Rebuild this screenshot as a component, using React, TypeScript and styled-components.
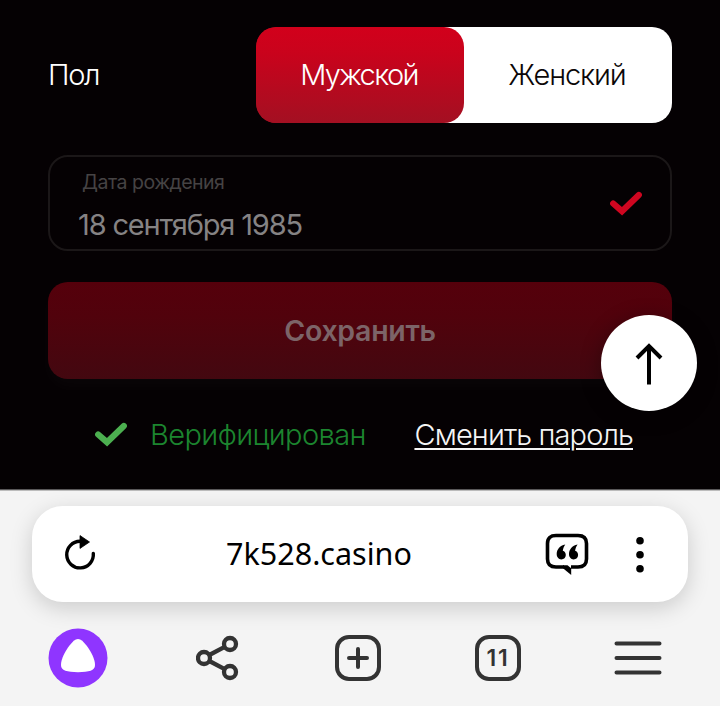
import React from "react";
import styled, { createGlobalStyle } from "styled-components";

const GlobalStyle = createGlobalStyle`
  *, *::before, *::after { box-sizing: border-box; }
  html, body { margin: 0; padding: 0; background: #f4f4f4; }
  button { border: 0; padding: 0; margin: 0; background: none; font: inherit; color: inherit; }
  svg { display: block; flex: none; }
`;

const Screen = styled.div`
  width: 720px;
  height: 706px;
  display: flex;
  flex-direction: column;
  overflow: hidden;
  font-family: Inter, "Liberation Sans", sans-serif;
  font-weight: 340;
  font-size: 29px;
  line-height: 36px;
  white-space: nowrap;
`;

const Profile = styled.main`
  position: relative;
  height: 490px;
  flex: none;
  padding: 27px 48px 0;
  background: #050103;
  border-bottom: 1px solid #5a5859;
  display: flex;
  flex-direction: column;
  color: #fff;
`;

const GenderRow = styled.div`
  display: flex;
  align-items: center;
  justify-content: space-between;
  height: 96px;
`;

const Label = styled.span<{ $spacing?: number }>`
  letter-spacing: ${(p) => p.$spacing ?? 0}px;
`;

const Segmented = styled.div`
  width: 416px;
  height: 96px;
  display: flex;
  border-radius: 20px;
  overflow: hidden;
  background: linear-gradient(90deg, #a50d20 30%, #fff 30%);
`;

const Segment = styled.button<{ $active?: boolean }>`
  flex: 1;
  padding-right: 2px;
  border-radius: 20px;
  color: ${(p) => (p.$active ? "#fff" : "#0b0708")};
  background: ${(p) =>
    p.$active ? "linear-gradient(180deg, #d2001b 0%, #c9031c 28%, #a31022 100%)" : "transparent"};
`;

const DateField = styled.div`
  margin-top: 32px;
  height: 96px;
  border: 2px solid #1b1718;
  border-radius: 20px;
  padding: 0 27px 0 28px;
  display: flex;
  align-items: center;
  justify-content: space-between;
`;

const FieldText = styled.div`
  display: flex;
  flex-direction: column;
  align-self: flex-start;
  padding-top: 11px;
`;

const Caption = styled.span`
  padding-left: 4px;
  font-size: 19.5px;
  font-weight: 400;
  letter-spacing: -0.5px;
  line-height: 28px;
  color: #464344;
`;

const DateValue = styled.span`
  margin-top: 11px;
  line-height: 36px;
  font-weight: 400;
  letter-spacing: -1.17px;
  color: #858384;
`;

const SaveButton = styled.button`
  margin-top: 31px;
  height: 97px;
  flex: none;
  border-radius: 20px;
  background: linear-gradient(180deg, #55000b 0%, #51020c 35%, #430810 100%);
  box-shadow: 0 8px 16px rgba(255, 255, 255, 0.025);
  color: #7c6468;
  font-weight: 600;
  font-size: 28.5px;
  letter-spacing: -0.3px;
`;

const AccountRow = styled.div`
  margin-top: 38px;
  padding: 0 39px 0 46px;
  display: flex;
  align-items: center;
  justify-content: space-between;
`;

const Verified = styled.div`
  display: flex;
  align-items: center;
  gap: 22px;
  color: #1c852f;

  svg { margin-bottom: 3px; }
`;

const PasswordLink = styled.a`
  color: #f5f5f5;
  letter-spacing: -0.88px;
  text-decoration: underline;
  text-decoration-thickness: 2px;
  text-underline-offset: 3px;
`;

const ScrollTop = styled.button`
  position: absolute;
  left: 601px;
  top: 315px;
  width: 96px;
  height: 96px;
  border-radius: 50%;
  background: #fff;
  box-shadow: 0 4px 20px rgba(0, 0, 0, 0.35);
  display: grid;
  place-items: center;
`;

const BrowserChrome = styled.footer`
  flex: 1;
  border-top: 1px solid #bcbcbc;
  background: #f4f4f4;
  padding-top: 15px;
  display: flex;
  flex-direction: column;
`;

const AddressBar = styled.div`
  height: 96px;
  flex: none;
  margin: 0 32px;
  border-radius: 31px;
  background: #fff;
  box-shadow: 0 6px 22px rgba(0, 0, 0, 0.17);
  display: grid;
  grid-template-columns: 96px 382px 1fr 96px;
  align-items: center;
  justify-items: center;
`;

const Url = styled.span`
  font-family: "Noto Sans", sans-serif;
  font-weight: 400;
  font-size: 30.5px;
  line-height: 40px;
  display: block;
  padding-bottom: 3px;
  color: #000;
`;

const PageActions = styled.div`
  justify-self: end;
  padding: 0 3px 2px 0;
`;

const NavBar = styled.nav`
  height: 104px;
  display: grid;
  grid-template-columns: repeat(5, 140px);
  align-items: center;
  padding: 8px 12px 0 8px;
`;

const NavItem = styled.button`
  display: grid;
  place-items: center;
  height: 60px;
  color: #333;
`;

const TabCount = styled.span`
  width: 46px;
  height: 46px;
  border: 4px solid #333;
  border-radius: 14px;
  padding: 1px 0 0 0;
  display: grid;
  place-items: center;
  font-size: 23px;
  line-height: 37px;
  font-weight: 600;
  font-kerning: none;
  letter-spacing: 1.8px;
`;

function Check({ color }: { color: string }) {
  return (
    <svg width="34" height="26" viewBox="0 0 34 26" fill="none">
      <path
        d="M4.200 13.500 13 21.200 29.800 5"
        stroke={color}
        strokeWidth="6.200"
        strokeLinecap="round"
      />
    </svg>
  );
}

function ArrowUp() {
  return (
    <svg width="30" height="44" viewBox="0 0 30 44" fill="none" stroke="#000" strokeWidth="4">
      <path d="M15 43.500V5M3 17 15 5l12 12" />
    </svg>
  );
}

function Reload() {
  return (
    <svg width="36" height="40" viewBox="0 0 36 40" fill="none">
      <path d="M18 7.300A13.300 13.300 0 1 0 31.300 19.500" stroke="#000" strokeWidth="3.400" strokeLinecap="round" />
      <path d="M18 1.600 27.500 8 18 14.400Z" fill="#000" stroke="#000" strokeWidth="0.800" strokeLinejoin="round" />
    </svg>
  );
}

function QuoteBubble() {
  return (
    <svg width="44" height="44" viewBox="0 0 44 44" fill="none">
      <path
        d="M26 36H33c5.600 0 8.500-2.600 8.500-8V12.500c0-5.400-2.900-8-8.500-8H11c-5.600 0-8.500 2.600-8.500 8V28c0 5.400 2.900 8 8.500 8h8"
        stroke="#000"
        strokeWidth="3.600"
      />
      <path d="M18 34.200h4.500l3.700 3V44L18 37.200Z" fill="#000" />
      <path
        d="M20.300 13.400c-5.600 1.200-8.600 5-8.600 9.700 0 3.200 2 5.300 4.600 5.300s4.500-1.900 4.500-4.400c0-2.100-1.200-3.700-3-4.200.3-2.300 1.100-4.400 2.500-6.400ZM32.600 13.400c-5.600 1.200-8.600 5-8.600 9.700 0 3.200 2 5.300 4.600 5.300s4.500-1.900 4.500-4.400c0-2.100-1.200-3.700-3-4.200.3-2.300 1.100-4.400 2.500-6.400Z"
        fill="#000"
      />
    </svg>
  );
}

function Kebab() {
  return (
    <svg width="10" height="38" viewBox="0 0 10 38">
      <circle cx="5" cy="5.800" r="3.800" />
      <circle cx="5" cy="19.800" r="3.800" />
      <circle cx="5" cy="33.800" r="3.800" />
    </svg>
  );
}

function AliceLogo() {
  return (
    <svg width="60" height="60" viewBox="0 0 60 60">
      <circle cx="30" cy="30" r="29.500" fill="#8f35ff" />
      <path
        d="M30 11c3 0 5.500 2.600 8.500 6.600C43 23.600 47 31 47 37c0 5.500-6 7.200-17 7.200S13 42.500 13 37c0-6 4-13.400 8.500-19.400C24.500 13.600 27 11 30 11Z"
        fill="#fff"
      />
    </svg>
  );
}

function Share() {
  return (
    <svg width="44" height="46" viewBox="0 0 44 46" fill="none" stroke="#333" strokeWidth="4.300">
      <circle cx="8" cy="23" r="6" />
      <circle cx="34" cy="9" r="6" />
      <circle cx="34" cy="37" r="6" />
      <path d="m13.300 20 15.400-8.200M13.300 26l15.400 8.200" />
    </svg>
  );
}

function NewTab() {
  return (
    <svg width="46" height="46" viewBox="0 0 46 46" fill="none" stroke="#333" strokeWidth="4" strokeLinecap="round">
      <rect x="2" y="2" width="42" height="42" rx="12" />
      <path d="M23 14v18M14 23h18" />
    </svg>
  );
}

function Menu() {
  return (
    <svg width="48" height="36" viewBox="0 0 48 36" fill="none" stroke="#333" strokeWidth="4" strokeLinecap="round">
      <path d="M2.500 3.500h43M2.500 18h43M2.500 32.500h43" />
    </svg>
  );
}

export default function App() {
  return (
    <Screen>
      <GlobalStyle />
      <Profile>
        <GenderRow>
          <Label $spacing={-1.3}>Пол</Label>
          <Segmented>
            <Segment $active>
              <Label $spacing={-1.65}>Мужской</Label>
            </Segment>
            <Segment>
              <Label $spacing={-1.1}>Женский</Label>
            </Segment>
          </Segmented>
        </GenderRow>
        <DateField>
          <FieldText>
            <Caption>Дата рождения</Caption>
            <DateValue>18 сентября 1985</DateValue>
          </FieldText>
          <Check color="#cf0620" />
        </DateField>
        <SaveButton>Сохранить</SaveButton>
        <AccountRow>
          <Verified>
            <Check color="#4caf50" />
            <Label $spacing={-0.58}>Верифицирован</Label>
          </Verified>
          <PasswordLink>Сменить пароль</PasswordLink>
        </AccountRow>
        <ScrollTop aria-label="Наверх">
          <ArrowUp />
        </ScrollTop>
      </Profile>
      <BrowserChrome>
        <AddressBar>
          <Reload />
          <Url>7k528.casino</Url>
          <PageActions>
            <QuoteBubble />
          </PageActions>
          <Kebab />
        </AddressBar>
        <NavBar>
          <NavItem><AliceLogo /></NavItem>
          <NavItem><Share /></NavItem>
          <NavItem><NewTab /></NavItem>
          <NavItem><TabCount>11</TabCount></NavItem>
          <NavItem><Menu /></NavItem>
        </NavBar>
      </BrowserChrome>
    </Screen>
  );
}
